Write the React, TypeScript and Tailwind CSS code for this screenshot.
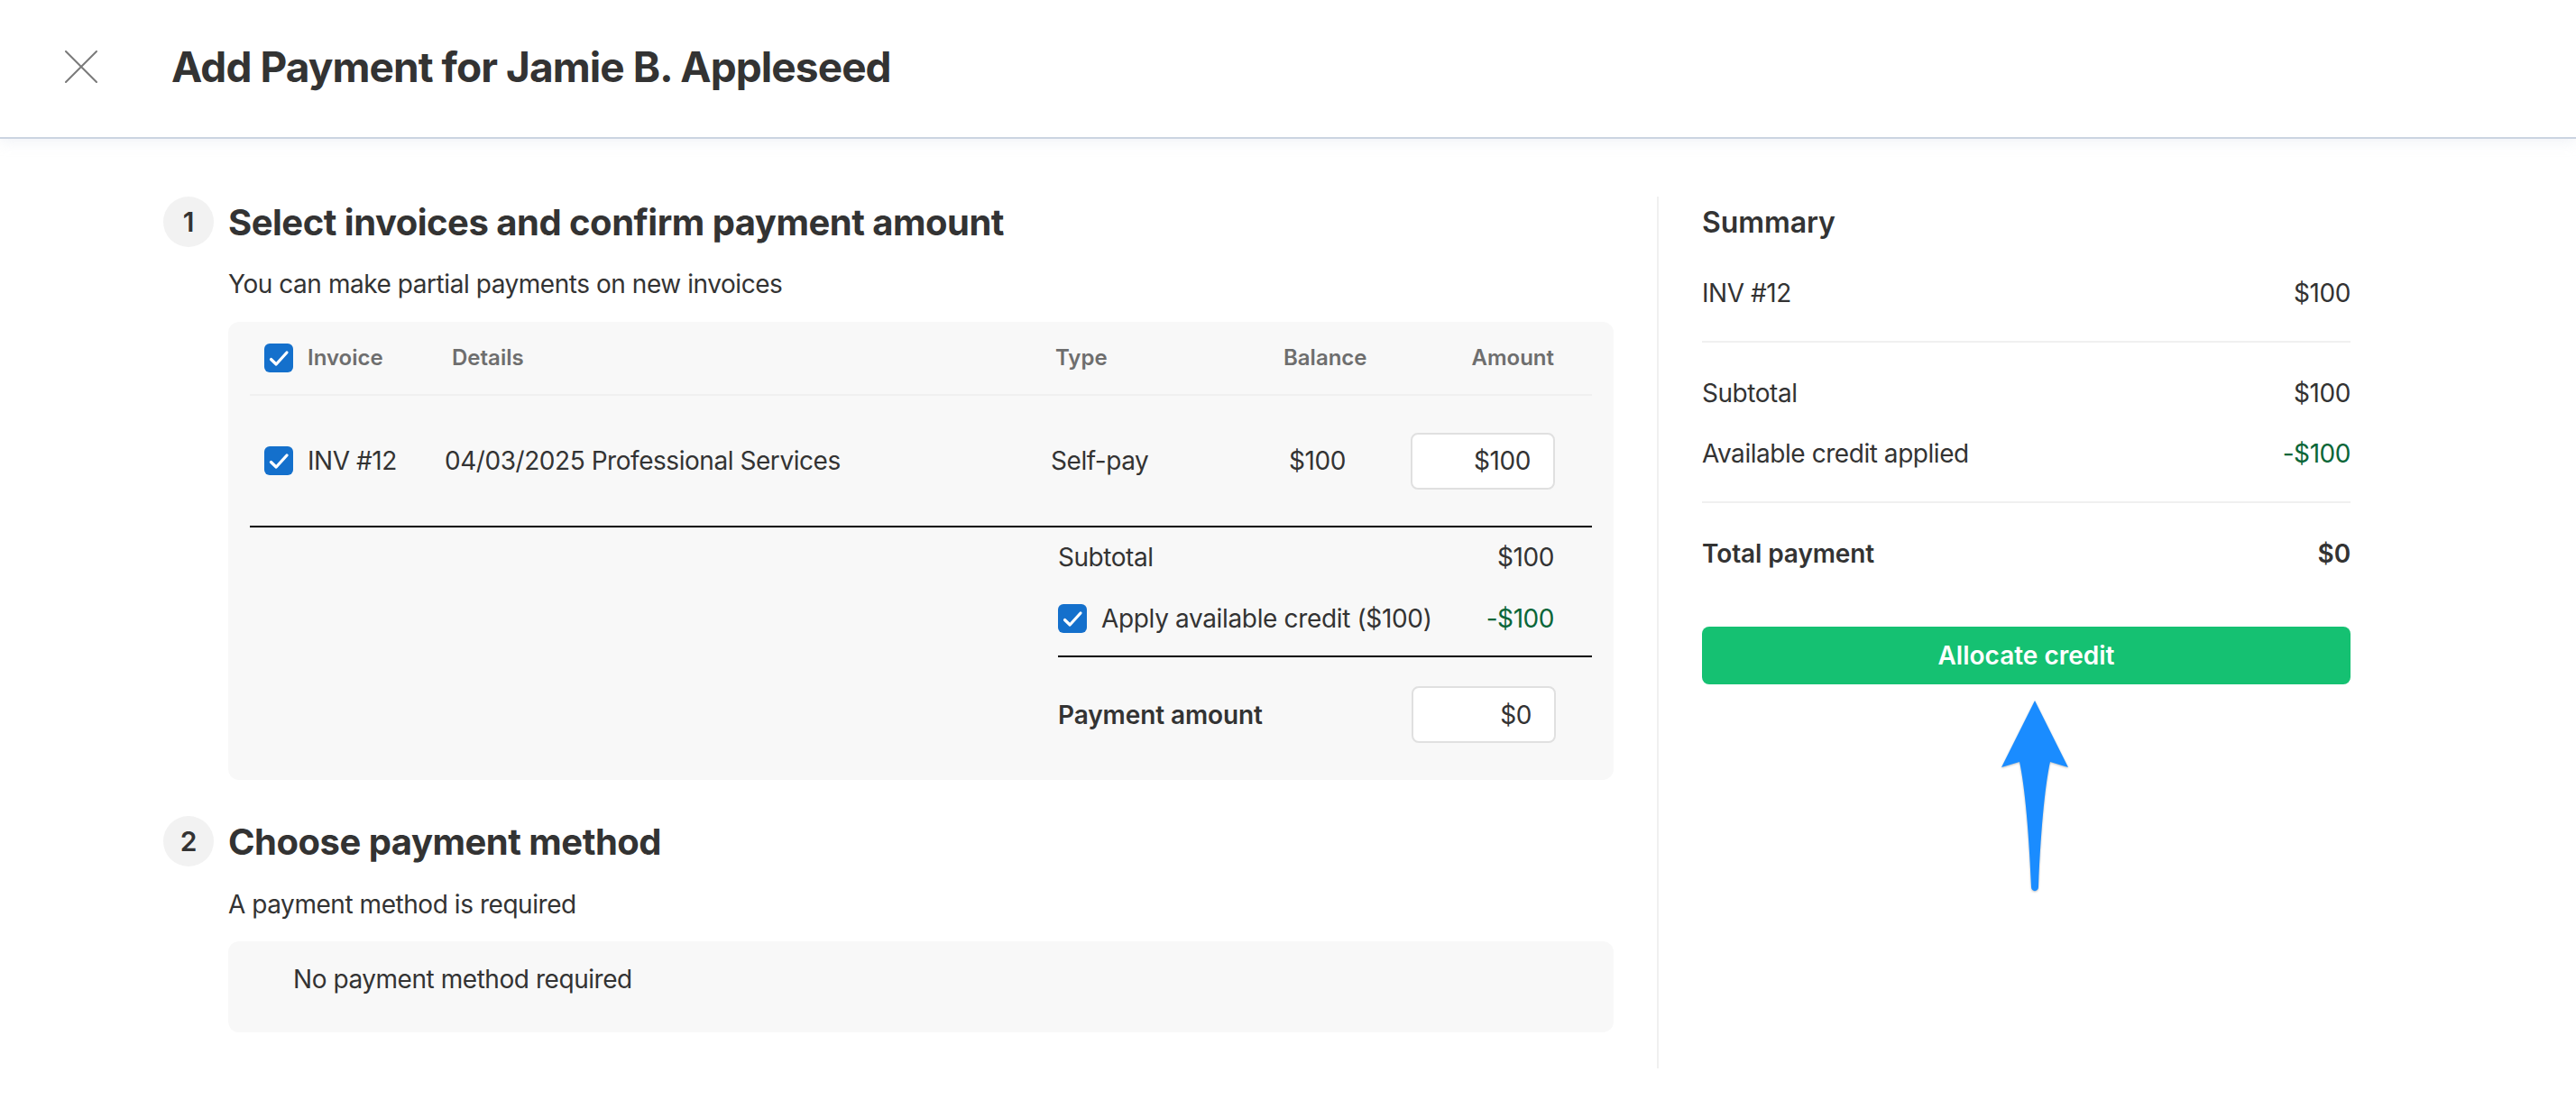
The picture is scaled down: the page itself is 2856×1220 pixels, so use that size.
import React from "react";

function Check() {
  return (
    <span className="flex h-[32px] w-[32px] shrink-0 items-center justify-center rounded-[6px] bg-[#1470cc]">
      <svg width="32" height="32" viewBox="0 0 32 32" fill="none">
        <path d="M7.5 17.5L13.2 23L25 10" stroke="#fff" strokeWidth="3.2" strokeLinecap="round" strokeLinejoin="round" />
      </svg>
    </span>
  );
}

function Step({ n, title }: { n: string; title: string }) {
  return (
    <div className="flex h-[56px] items-center gap-[16px]">
      <span className="flex h-[56px] w-[56px] items-center justify-center rounded-full bg-[#f2f2f2] text-[30px] font-semibold tracking-normal text-[#333]">{n}</span>
      <h2 className="pt-[2px] text-[40px] leading-[56px] font-bold tracking-[-0.5px] text-[#333]">{title}</h2>
    </div>
  );
}

function Amount({ value }: { value: string }) {
  return (
    <input
      readOnly
      value={value}
      className="h-[63px] w-[160px] rounded-[8px] border-2 border-[#e0e0e0] bg-white pr-[25px] text-right text-[28px] text-[#333] outline-none"
    />
  );
}

function SumRow({ label, value, cls = "" }: { label: string; value: string; cls?: string }) {
  return (
    <div className="flex h-[40px] items-center justify-between leading-[40px]">
      <span>{label}</span>
      <span className={cls}>{value}</span>
    </div>
  );
}

export default function App() {
  return (
    <div className="relative h-[1220px] w-[2856px] overflow-hidden bg-white text-[28px] tracking-[-0.45px] text-[#333] [font-family:Inter,sans-serif]">
      <header className="flex h-[154px] items-center border-b-2 border-[#cbd4e1] pb-[5px] pl-[72px] shadow-[0_4px_14px_rgba(203,212,225,0.28)]">
        <svg width="36" height="36" viewBox="0 0 36 36" fill="none" className="shrink-0">
          <path d="M1 1L35 35M35 1L1 35" stroke="#7a7a7a" strokeWidth="2" strokeLinecap="round" />
        </svg>
        <h1 className="ml-[82px] text-[46px] leading-[60px] font-bold tracking-[-0.93px] text-[#333]">Add Payment for Jamie B. Appleseed</h1>
      </header>

      <main className="flex pt-[64px] pl-[181px]">
        <section className="w-[1608px]">
          <Step n="1" title="Select invoices and confirm payment amount" />
          <p className="mt-[21px] ml-[72px] leading-[40px]">You can make partial payments on new invoices</p>

          <div className="mt-[22px] ml-[72px] h-[508px] rounded-[12px] bg-[#f8f8f8] px-[24px]">
            <div className="flex h-[82px] items-center border-b-2 border-[#f0f0f0] pl-[16px] text-[24px] font-semibold tracking-normal text-[#6e6e6e]">
              <Check />
              <span className="ml-[16px] w-[160px]">Invoice</span>
              <span className="w-[669px]">Details</span>
              <span className="w-[253px]">Type</span>
              <span className="w-[120px]">Balance</span>
              <span className="flex-1 pr-[42px] text-right">Amount</span>
            </div>

            <div className="flex h-[146px] items-center border-b-2 border-black pl-[16px]">
              <Check />
              <span className="ml-[16px] w-[152px]">INV #12</span>
              <span className="w-[672px]">04/03/2025 Professional Services</span>
              <span className="w-[264px]">Self-pay</span>
              <span className="w-[135px]">$100</span>
              <Amount value="$100" />
            </div>

            <div className="ml-[896px]">
              <div className="flex h-[66px] items-center justify-between pr-[42px]">
                <span>Subtotal</span>
                <span>$100</span>
              </div>
              <div className="flex h-[70px] items-center pr-[42px]">
                <Check />
                <span className="ml-[16px] tracking-[-0.35px]">Apply available credit ($100)</span>
                <span className="ml-auto text-[#0a6638]">-$100</span>
              </div>
              <div className="mt-[6px] flex items-center justify-between border-t-2 border-black pt-[32px] pr-[40px]">
                <span className="font-semibold tracking-[-0.1px]">Payment amount</span>
                <Amount value="$0" />
              </div>
            </div>
          </div>

          <div className="mt-[40px]">
            <Step n="2" title="Choose payment method" />
          </div>
          <p className="mt-[22px] ml-[72px] leading-[40px]">A payment method is required</p>
          <div className="mt-[21px] ml-[72px] h-[101px] rounded-[12px] bg-[#f8f8f8] pt-[22px] pl-[72px] leading-[40px]">No payment method required</div>
        </section>

        <aside className="ml-[48px] h-[967px] w-[769px] border-l-2 border-[#f0f0f0] pt-[9px] pl-[48px]">
          <h3 className="text-[32px] leading-[40px] font-semibold tracking-[-0.1px]">Summary</h3>
          <div className="mt-[38px] border-b-2 border-[#f0f0f0] pb-[33px]">
            <SumRow label="INV #12" value="$100" />
          </div>
          <div className="mt-[36px] border-b-2 border-[#f0f0f0] pb-[33px]">
            <SumRow label="Subtotal" value="$100" />
            <div className="mt-[27px]">
              <SumRow label="Available credit applied" value="-$100" cls="text-[#0a6638]" />
            </div>
          </div>
          <div className="mt-[36px] font-semibold tracking-[-0.1px]">
            <SumRow label="Total payment" value="$0" />
          </div>
          <button className="mt-[61px] flex h-[64px] w-full items-center justify-center rounded-[8px] bg-[#15c172] text-[28px] font-semibold tracking-normal text-white">Allocate credit</button>
        </aside>
      </main>

      <svg width="90" height="225" viewBox="0 0 90 225" className="absolute top-[770px] left-[2210px] drop-shadow-[0_1px_1px_rgba(0,0,0,0.25)]">
        <path d="M46 7L83 81L63 75C58.5 95 53 140 50 214C49.8 219.5 42.2 219.5 42 214C39 140 33.5 95 29 75L9 81Z" fill="#1a8cff" />
      </svg>
    </div>
  );
}
